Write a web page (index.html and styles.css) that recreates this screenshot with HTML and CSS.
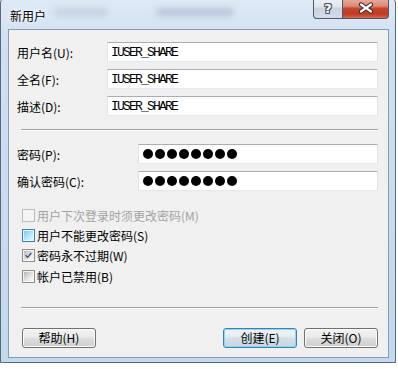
FILE: index.html
```html
<!DOCTYPE html>
<html lang="zh-CN">
<head>
  <meta charset="UTF-8">
  <title>新用户</title>
  <link rel="stylesheet" href="styles.css">
</head>
<body>
  <div class="window">
    <div class="titlebar">
      <span class="title">新用户</span>
      <span class="blur blur-a"></span>
      <span class="blur blur-b"></span>
      <div class="caption">
        <span class="cap-help">?</span>
        <span class="cap-close">
          <svg width="18" height="12" viewBox="0 0 18 12">
            <path d="M4 2.5 L14 9.5 M14 2.5 L4 9.5" stroke="#3b2624" stroke-width="4.2" stroke-linecap="round" fill="none"/>
            <path d="M4 2.5 L14 9.5 M14 2.5 L4 9.5" stroke="#fff" stroke-width="2.2" stroke-linecap="round" fill="none"/>
          </svg>
        </span>
      </div>
    </div>

    <div class="client">
      <div class="fields">
        <div class="row"><span class="label">用户名(U):</span><div class="textbox">IUSER_SHARE</div></div>
        <div class="row"><span class="label">全名(F):</span><div class="textbox">IUSER_SHARE</div></div>
        <div class="row"><span class="label">描述(D):</span><div class="textbox">IUSER_SHARE</div></div>
      </div>

      <div class="sep"></div>

      <div class="fields pw">
        <div class="row">
          <span class="label">密码(P):</span>
          <div class="textbox"><span class="dot"></span><span class="dot"></span><span class="dot"></span><span class="dot"></span><span class="dot"></span><span class="dot"></span><span class="dot"></span><span class="dot"></span></div>
        </div>
        <div class="row">
          <span class="label">确认密码(C):</span>
          <div class="textbox"><span class="dot"></span><span class="dot"></span><span class="dot"></span><span class="dot"></span><span class="dot"></span><span class="dot"></span><span class="dot"></span><span class="dot"></span></div>
        </div>
      </div>

      <div class="checks">
        <div class="check disabled"><span class="box"></span>用户下次登录时须更改密码(M)</div>
        <div class="check hover"><span class="box"></span>用户不能更改密码(S)</div>
        <div class="check">
          <span class="box">
            <svg width="11" height="11" viewBox="0 0 11 11"><path d="M2 5.2 L4.4 7.8 L9 2.4" stroke="#43577e" stroke-width="1.8" fill="none"/></svg>
          </span>密码永不过期(W)
        </div>
        <div class="check"><span class="box"></span>帐户已禁用(B)</div>
      </div>

      <div class="sep sep-low"></div>

      <div class="buttons">
        <button class="btn help">帮助(H)</button>
        <button class="btn default">创建(E)</button>
        <button class="btn">关闭(O)</button>
      </div>
    </div>
  </div>
</body>
</html>
```

FILE: styles.css
```css
* {
  box-sizing: border-box;
}

body {
  margin: 0;
  background: #fff;
  font-family: "Noto Sans CJK SC", sans-serif;
  font-size: 12px;
  color: #000;
}

.window {
  width: 396px;
  height: 366px;
  margin-top: -3px;
  border: 1px solid #5b6878;
  border-radius: 6px 6px 0 0;
  background: linear-gradient(#dfeaf6, #d0e0f2 12%, #c8dbf0 60%, #c4d8ef);
  display: flex;
  flex-direction: column;
}

/* title bar */
.titlebar {
  height: 31px;
  display: flex;
  align-items: flex-start;
  flex-shrink: 0;
}

.title {
  margin: 12px 0 0 9px;
  line-height: 12px;
  font-size: 12px;
  text-shadow: 0 0 6px #fff, 0 0 3px #fff;
}

.blur {
  height: 8px;
  margin-top: 10px;
  background: rgba(80, 100, 130, 0.16);
  border-radius: 4px;
  filter: blur(3px);
}

.blur-a {
  width: 54px;
  margin-left: 8px;
}

.blur-b {
  width: 78px;
  margin-left: 48px;
  background: rgba(60, 80, 110, 0.22);
}

.caption {
  margin-left: auto;
  margin-right: 6px;
  display: flex;
}

.cap-help,
.cap-close {
  height: 21px;
  display: flex;
  align-items: center;
  justify-content: center;
  border: 1px solid #4f5a68;
  border-top: 0;
}

.cap-help {
  width: 29px;
  border-right: 0;
  border-radius: 0 0 0 4px;
  background: linear-gradient(#eef2f7, #dfe6ee 45%, #c9d3df 50%, #d4dde8);
  font-family: "DejaVu Sans", sans-serif;
  font-weight: bold;
  font-size: 13px;
  color: #fff;
  padding-top: 1px;
  text-shadow: 1px 0 0 #4a5564, -1px 0 0 #4a5564, 0 1px 0 #4a5564, 0 -1px 0 #4a5564, 1px 1px 0 #4a5564, -1px -1px 0 #4a5564, 1px -1px 0 #4a5564, -1px 1px 0 #4a5564;
}

.cap-close {
  width: 47px;
  border-radius: 0 0 4px 0;
  background: linear-gradient(#eab1a4, #dd8c78 40%, #c7462f 52%, #bf3b24 80%, #d6694e);
}

/* client area */
.client {
  flex: 1;
  margin: 0 6px 4px 7px;
  border: 1px solid #8a9bb0;
  background: #f0f0f0;
  padding: 12px 10px 0 8px;
}

.fields {
  display: flex;
  flex-direction: column;
  gap: 7px;
}

.row {
  display: flex;
  align-items: center;
  height: 20px;
}

.label {
  width: 90px;
  flex-shrink: 0;
}

.pw {
  margin-top: 13px;
}

.pw .label {
  width: 121px;
}

.textbox {
  flex: 1;
  height: 20px;
  display: flex;
  align-items: center;
  padding-left: 3px;
  background: #fff;
  border: 1px solid #e2e3ea;
  border-top-color: #abadb3;
  border-bottom-color: #e3e9ef;
  font-family: "Liberation Mono", monospace;
  font-size: 13px;
  letter-spacing: -1.8px;
}

.pw .textbox {
  padding-left: 4px;
}

.dot {
  width: 10px;
  height: 10px;
  margin-right: 2px;
  border-radius: 50%;
  background: #000;
}

.sep {
  height: 2px;
  margin: 13px 0 0 4px;
  border-top: 1px solid #a0a0a0;
  border-bottom: 1px solid #fff;
}

.sep-low {
  margin-top: 20px;
}

/* checkboxes */
.checks {
  margin-top: 14px;
  display: flex;
  flex-direction: column;
}

.check {
  height: 20.4px;
  display: flex;
  align-items: center;
}

.box {
  width: 13px;
  height: 13px;
  margin: 0 2px 0 5px;
  border: 1px solid #8e8f8f;
  background: #f4f4f4;
  padding: 1px;
  display: flex;
  align-items: center;
  justify-content: center;
  position: relative;
}

.box::before {
  content: "";
  position: absolute;
  left: 1px;
  top: 1px;
  width: 9px;
  height: 9px;
  background: linear-gradient(135deg, #b3b8be, #e6e7e8 60%, #f8f8f8);
}

.box svg {
  position: relative;
}

.check.hover .box {
  border-color: #3c7fb1;
  background: #def9fa;
}

.check.hover .box::before {
  background: linear-gradient(135deg, #80c8f3, #bfe8fa 60%, #e4f8fc);
}

.check.disabled {
  color: #a3a3a3;
}

.check.disabled .box {
  border-color: #bcbcbc;
  background: #f4f4f4;
}

.check.disabled .box::before {
  background: #f4f4f4;
}

/* buttons */
.buttons {
  margin-top: 19px;
  display: flex;
  gap: 7px;
}

.btn {
  width: 74px;
  height: 20px;
  padding: 0;
  font-family: "Noto Sans CJK SC", sans-serif;
  font-size: 12px;
  color: #000;
  border: 1px solid #707070;
  border-radius: 3px;
  background: linear-gradient(#f2f2f2, #ebebeb 45%, #dddddd 50%, #cfcfcf);
  box-shadow: inset 0 0 0 1px #fbfbfb;
}

.btn.help {
  margin-left: 5px;
  margin-right: auto;
}

.btn.default {
  border-color: #3c7fb1;
  box-shadow: inset 0 0 0 1px #8fd6f5;
  background: linear-gradient(#eef4f8, #e4ecf1 45%, #d3dfe7 50%, #c8d6e0);
}
```
